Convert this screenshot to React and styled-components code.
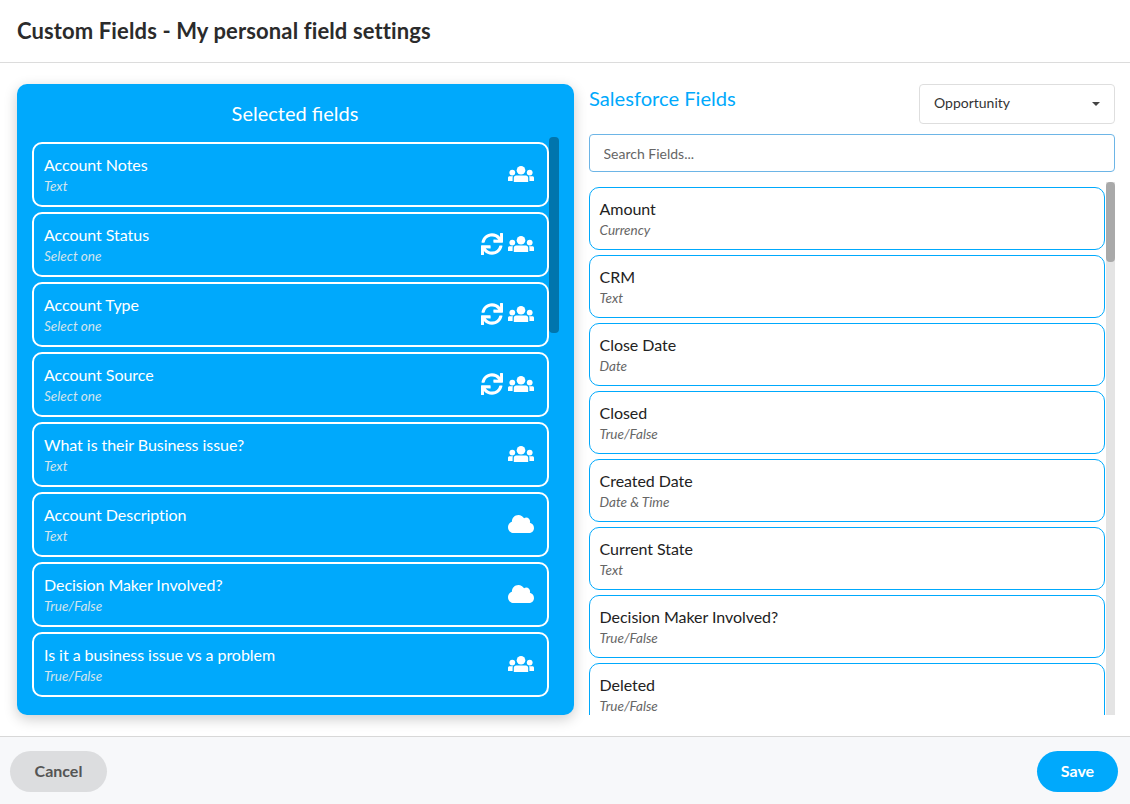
import React from "react";
import styled, { createGlobalStyle } from "styled-components";
import { FaCloud, FaSync } from "react-icons/fa";

const Global = createGlobalStyle`
  html, body { margin: 0; padding: 0; background: #fff; }
  body { font-family: Lato, "Liberation Sans", sans-serif; color: #222; }
  * { box-sizing: border-box; }
`;
const Page = styled.div`
  width: 1130px; height: 804px; display: flex; flex-direction: column; overflow: hidden;
`;
const Header = styled.header`
  height: 63px; flex: none; border-bottom: 1px solid #dcdcdc; padding: 0 17px;
  display: flex; align-items: center;
`;
const Title = styled.h1`
  margin: 0 0 1px; font-size: 22px; font-weight: 700; color: #2b2b2b; letter-spacing: 0.12px;
`;
const Main = styled.main`
  height: 673px; flex: none; display: flex; padding: 21px 15px 21px 17px; gap: 15px;
`;
const SelectedPanel = styled.section`
  width: 557px; flex: none; height: 631px; background: #00a9fc; border-radius: 10px;
  box-shadow: 0 4px 14px rgba(0,0,0,.2); position: relative; padding: 0 25px 0 15px; overflow: hidden;
`;
const PanelTitle = styled.h2`
  margin: 0; height: 58px; line-height: 58px; padding-left: 9px; text-align: center; font-size: 20px; font-weight: 400; color: #fff;
`;
const CardStack = styled.div`
  display: flex; flex-direction: column; gap: 5px;
`;
const SelectedCard = styled.div`
  height: 65px; flex: none; border: 2px solid #fff; border-radius: 10px; color: #fff;
  padding: 0 13px 0 10px; display: flex; align-items: center; justify-content: space-between;
`;
const CardText = styled.div`
  display: flex; flex-direction: column;
`;
const FieldName = styled.span`
  font-size: 16px; line-height: 20px; letter-spacing: -0.05px; color: ${p => (p.$light ? "#fff" : "#222")};
`;
const FieldType = styled.span`
  font-size: 13.5px; line-height: 18px; margin-top: 2px; font-style: italic;
  color: ${p => (p.$light ? "#d2e4ee" : "#666")};
`;
const Icons = styled.div`
  display: flex; align-items: center; gap: 5px; color: #fff; padding-bottom: 2px;
`;
const Thumb = styled.div`
  position: absolute; left: 532px; top: 53px; width: 10px; height: 196px; border-radius: 4px; background: #0075ad;
`;
const RightColumn = styled.section`
  flex: 1; min-width: 0; display: flex; flex-direction: column; height: 631px; overflow: hidden;
`;
const TopRow = styled.div`
  display: flex; justify-content: space-between; height: 40px; flex: none;
`;
const SectionTitle = styled.h2`
  margin: 0; font-size: 20.15px; line-height: 29px; font-weight: 400; color: #00a9fc;
`;
const SelectBox = styled.div`
  width: 196px; height: 40px; border: 1px solid #dedede; border-radius: 4px; background: #fff;
  display: flex; align-items: center; justify-content: space-between; padding: 0 14px 3px 14px;
  font-size: 14px; color: #333;
`;
const Caret = styled.span`
  width: 0; height: 0; margin-top: 2px; border-left: 4px solid transparent; border-right: 4px solid transparent; border-top: 4px solid #444;
`;
const Search = styled.input`
  margin-top: 10px; width: 100%; height: 38px; flex: none; border: 1px solid #6db5e6; border-radius: 4px;
  padding: 0 13.5px; font: 14px Lato, sans-serif; outline: none;
  &::placeholder { color: #666; opacity: 1; }
`;
const ListArea = styled.div`
  margin-top: 10px; flex: 1; min-height: 0; position: relative; overflow: hidden; padding-top: 5px; padding-right: 10px;
`;
const FieldCard = styled.div`
  height: 63px; flex: none; border: 1px solid #00a9fc; border-radius: 10px; padding: 0 9.6px;
  display: flex; flex-direction: column; justify-content: center; margin-bottom: 5px; background: #fff;
`;
const Track = styled.div`
  position: absolute; right: 0; top: 0; bottom: 0; width: 9px; background: #e4e4e4;
`;
const TrackThumb = styled.div`
  width: 100%; height: 80px; border-radius: 4px; background: #a9a9a9;
`;
const Footer = styled.footer`
  flex: 1; background: #f7f8fa; border-top: 1px solid #d8d8d8; display: flex; align-items: center;
  justify-content: space-between; padding: 1px 12px 0 10px;
`;
const Button = styled.button`
  height: 41px; width: ${p => p.$w}px; border: 0; border-radius: 21px; padding: 0 0 2px; font: 700 16px Lato, sans-serif;
  background: ${p => (p.$primary ? "#00a9fc" : "#dcdddf")}; color: ${p => (p.$primary ? "#fff" : "#555")};
`;

const selected = [
  ["Account Notes", "Text", "users"],
  ["Account Status", "Select one", "sync"],
  ["Account Type", "Select one", "sync"],
  ["Account Source", "Select one", "sync"],
  ["What is their Business issue?", "Text", "users"],
  ["Account Description", "Text", "cloud"],
  ["Decision Maker Involved?", "True/False", "cloud"],
  ["Is it a business issue vs a problem", "True/False", "users"],
];
const fields = [
  ["Amount", "Currency"], ["CRM", "Text"], ["Close Date", "Date"], ["Closed", "True/False"],
  ["Created Date", "Date & Time"], ["Current State", "Text"],
  ["Decision Maker Involved?", "True/False"], ["Deleted", "True/False"],
];

function UsersIcon() {
  return (
    <svg width="26" height="16" viewBox="0 0 26 16" fill="currentColor" aria-hidden="true">
      <circle cx="13" cy="4.3" r="4.3" />
      <path d="M8.2 9.4h9.6c1.5 0 2.4 1 2.4 2.5V16H5.800v-4.100c0-1.500.9-2.500 2.400-2.500z" />
      <circle cx="4.300" cy="6.600" r="2.900" />
      <circle cx="21.700" cy="6.600" r="2.900" />
      <path d="M1.600 10.200h3.400c-.3.500-.4 1.100-.4 1.700V15H0v-3.200c0-.9.700-1.600 1.600-1.600z" />
      <path d="M24.400 10.200H21c.3.500.4 1.100.4 1.700V15H26v-3.200c0-.9-.7-1.600-1.600-1.600z" />
    </svg>
  );
}

function CardIcons({ kind }) {
  if (kind === "cloud") return <Icons><FaCloud size={26} /></Icons>;
  return (
    <Icons>
      {kind === "sync" && <FaSync size={22} />}
      <UsersIcon />
    </Icons>
  );
}

export default function App() {
  return (
    <Page>
      <Global />
      <Header><Title>Custom Fields - My personal field settings</Title></Header>
      <Main>
        <SelectedPanel>
          <PanelTitle>Selected fields</PanelTitle>
          <CardStack>
            {selected.map(([n, t, k]) => (
              <SelectedCard key={n}>
                <CardText>
                  <FieldName $light>{n}</FieldName>
                  <FieldType $light>{t}</FieldType>
                </CardText>
                <CardIcons kind={k} />
              </SelectedCard>
            ))}
          </CardStack>
          <Thumb />
        </SelectedPanel>
        <RightColumn>
          <TopRow>
            <SectionTitle>Salesforce Fields</SectionTitle>
            <SelectBox>Opportunity<Caret /></SelectBox>
          </TopRow>
          <Search placeholder="Search Fields..." />
          <ListArea>
            {fields.map(([n, t]) => (
              <FieldCard key={n}>
                <FieldName>{n}</FieldName>
                <FieldType>{t}</FieldType>
              </FieldCard>
            ))}
            <Track><TrackThumb /></Track>
          </ListArea>
        </RightColumn>
      </Main>
      <Footer>
        <Button $w={97}>Cancel</Button>
        <Button $w={81} $primary>Save</Button>
      </Footer>
    </Page>
  );
}
